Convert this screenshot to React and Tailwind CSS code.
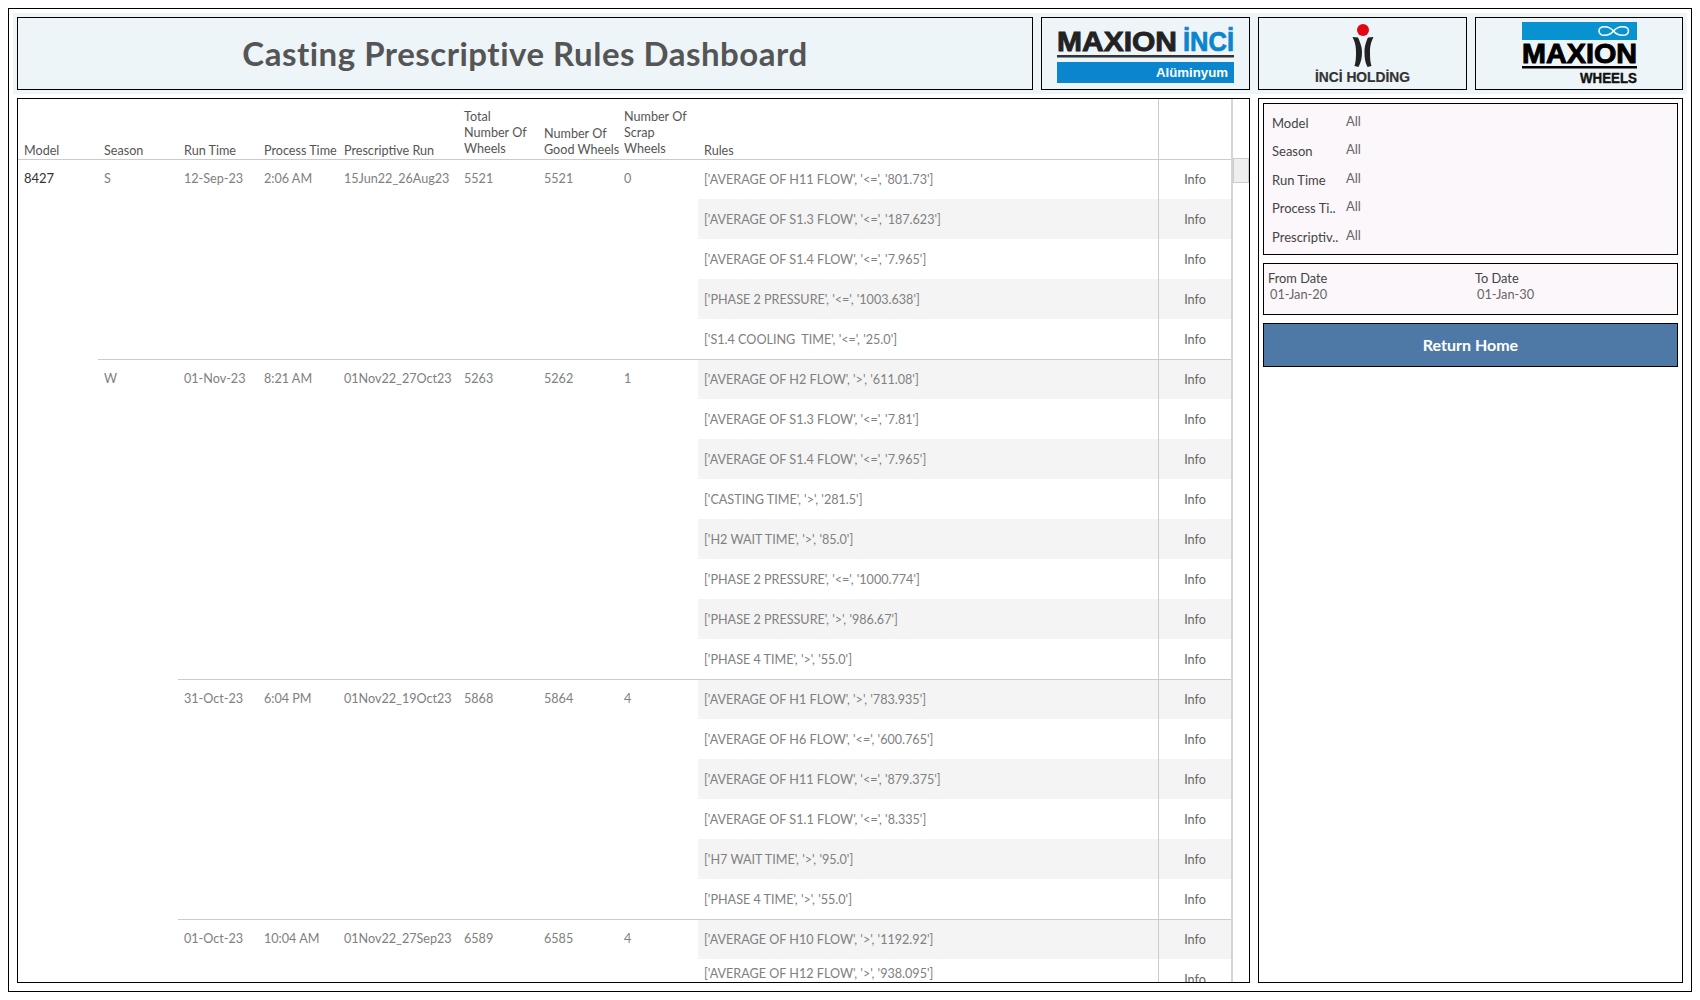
import React from 'react';

const seasons = [
  {
    season: 'S',
    runs: [
      {
        runTime: '12-Sep-23', process: '2:06 AM', run: '15Jun22_26Aug23', total: '5521', good: '5521', scrap: '0', startGrey: false,
        rules: [
          "['AVERAGE OF H11 FLOW', '<=', '801.73']",
          "['AVERAGE OF S1.3 FLOW', '<=', '187.623']",
          "['AVERAGE OF S1.4 FLOW', '<=', '7.965']",
          "['PHASE 2 PRESSURE', '<=', '1003.638']",
          "['S1.4 COOLING  TIME', '<=', '25.0']",
        ],
      },
    ],
  },
  {
    season: 'W',
    runs: [
      {
        runTime: '01-Nov-23', process: '8:21 AM', run: '01Nov22_27Oct23', total: '5263', good: '5262', scrap: '1', startGrey: true,
        rules: [
          "['AVERAGE OF H2 FLOW', '>', '611.08']",
          "['AVERAGE OF S1.3 FLOW', '<=', '7.81']",
          "['AVERAGE OF S1.4 FLOW', '<=', '7.965']",
          "['CASTING TIME', '>', '281.5']",
          "['H2 WAIT TIME', '>', '85.0']",
          "['PHASE 2 PRESSURE', '<=', '1000.774']",
          "['PHASE 2 PRESSURE', '>', '986.67']",
          "['PHASE 4 TIME', '>', '55.0']",
        ],
      },
      {
        runTime: '31-Oct-23', process: '6:04 PM', run: '01Nov22_19Oct23', total: '5868', good: '5864', scrap: '4', startGrey: true,
        rules: [
          "['AVERAGE OF H1 FLOW', '>', '783.935']",
          "['AVERAGE OF H6 FLOW', '<=', '600.765']",
          "['AVERAGE OF H11 FLOW', '<=', '879.375']",
          "['AVERAGE OF S1.1 FLOW', '<=', '8.335']",
          "['H7 WAIT TIME', '>', '95.0']",
          "['PHASE 4 TIME', '>', '55.0']",
        ],
      },
      {
        runTime: '01-Oct-23', process: '10:04 AM', run: '01Nov22_27Sep23', total: '6589', good: '6585', scrap: '4', startGrey: true,
        rules: [
          "['AVERAGE OF H10 FLOW', '>', '1192.92']",
          "['AVERAGE OF H12 FLOW', '>', '938.095']",
        ],
      },
    ],
  },
];

const filters = [
  ['Model', 'All'],
  ['Season', 'All'],
  ['Run Time', 'All'],
  ['Process Ti..', 'All'],
  ['Prescriptiv..', 'All'],
];

const logoText = { fontFamily: '"Liberation Sans", Arial, sans-serif', fontWeight: 700 };

const LogoBox = ({ width, children }) => (
  <div className={`h-[73px] border border-black ${width}`}>{children}</div>
);

const MaxionInciLogo = () => (
  <svg className="block w-full h-full" viewBox="1042 18 207 71">
    <text x="1057" y="50.5" fontSize="27.5" fill="#222" stroke="#222" strokeWidth="0.9" textLength="120" lengthAdjust="spacingAndGlyphs" style={logoText}>MAXION</text>
    <text x="1183" y="50.5" fontSize="27.5" fill="#0a85ce" stroke="#0a85ce" strokeWidth="0.7" textLength="51" lengthAdjust="spacingAndGlyphs" style={logoText}>İNCİ</text>
    <rect x="1057" y="55" width="177" height="2.5" fill="#333" />
    <rect x="1057" y="62" width="177" height="21" fill="#0a85ce" />
    <text x="1156" y="77" fontSize="13" fill="#fff" textLength="72" lengthAdjust="spacingAndGlyphs" style={logoText}>Alüminyum</text>
  </svg>
);

const InciHoldingLogo = () => (
  <svg className="block w-full h-full" viewBox="1259 18 207 71">
    <circle cx="1363" cy="30" r="6" fill="#e30613" />
    <path d="M1352.5 37 L1358 37.5 C1361 44 1362 48 1362 52 C1362 58 1361 62 1358.5 67 L1354.5 66 C1356 61 1356 57 1356 52 C1356 47 1355.5 43 1352.5 37Z" fill="#222" />
    <path d="M1373.5 37 L1368 37.5 C1365 44 1364.5 48 1364.5 52 C1364.5 58 1365 62 1367.5 67 L1371.5 66 C1370 61 1370 57 1370 52 C1370 47 1370.5 43 1373.5 37Z" fill="#222" />
    <text x="1315" y="82" fontSize="14" fill="#333" stroke="#333" strokeWidth="0.2" textLength="95" lengthAdjust="spacingAndGlyphs" style={logoText}>İNCİ HOLDİNG</text>
  </svg>
);

const MaxionWheelsLogo = () => (
  <svg className="block w-full h-full" viewBox="1476 18 206 71">
    <rect x="1522" y="22" width="115" height="18" fill="#0893d0" />
    <path d="M1613.5 31 C1609 25.5 1599 25 1599 31 C1599 37 1609 36.5 1613.5 31 C1618 25.5 1628.5 25 1628.5 31 C1628.5 37 1618 36.5 1613.5 31Z" fill="none" stroke="#fff" strokeWidth="1.6" />
    <text x="1522" y="63" fontSize="28.5" fill="#000" stroke="#000" strokeWidth="1" textLength="115" lengthAdjust="spacingAndGlyphs" style={logoText}>MAXION</text>
    <rect x="1522" y="66" width="115" height="2.5" fill="#000" />
    <text x="1580" y="83" fontSize="14" fill="#111" stroke="#111" strokeWidth="0.4" textLength="57" lengthAdjust="spacingAndGlyphs" style={logoText}>WHEELS</text>
  </svg>
);

const Cell = ({ width, rule, children }) => (
  <div className={`${width} h-10 pl-[6px] pb-[1px] flex items-center text-[12.6px] text-[#808080] whitespace-nowrap overflow-hidden ${rule ? 'border-t border-[#ccc]' : ''}`}>
    {children}
  </div>
);

const RuleRow = ({ rule, grey, topRule, last }) => (
  <div className={`flex h-10 ${grey ? 'bg-[#f4f4f4]' : ''} ${topRule ? 'border-t border-[#ccc]' : ''}`}>
    <div className="w-[460px] pl-[6px] pt-[2px] flex items-center text-[12.6px] text-[#808080] whitespace-pre">
      <span className={last ? 'mb-3' : ''}>{rule}</span>
    </div>
    <div className="w-[73px] pt-[2px] flex items-center justify-center text-[12.6px] text-[#666] border-l border-[#ccc]">Info</div>
  </div>
);

const HeaderCell = ({ width, pad = 'pb-0', children }) => (
  <div className={`${width} ${pad} pl-[6px] text-[12.6px] leading-[16px] text-[#555] whitespace-nowrap`}>{children}</div>
);

const App = () => {
  return (
    <div className="w-[1700px] h-[1000px] bg-white p-2 font-['Lato',sans-serif]">
      <div className="h-[984px] border border-black px-1 pt-1">
        {/* Header */}
        <div className="h-[81px] bg-[#eef5f9] p-1 flex gap-2">
          <div className="flex-1 h-[73px] border border-black flex items-center justify-center">
            <h1 className="text-[33px] tracking-[0.5px] font-bold text-[#555]">Casting Prescriptive Rules Dashboard</h1>
          </div>
          <LogoBox width="w-[209px]"><MaxionInciLogo /></LogoBox>
          <LogoBox width="w-[209px]"><InciHoldingLogo /></LogoBox>
          <LogoBox width="w-[208px]"><MaxionWheelsLogo /></LogoBox>
        </div>

        <div className="mt-1 px-1 flex gap-2">
          {/* Table */}
          <div className="w-[1233px] h-[885px] border border-black flex overflow-hidden">
            <div className="w-[1213px]">
              <div className="h-[60px] flex items-end">
                <HeaderCell width="w-[80px]">Model</HeaderCell>
                <HeaderCell width="w-[80px]">Season</HeaderCell>
                <HeaderCell width="w-[80px]">Run Time</HeaderCell>
                <HeaderCell width="w-[80px]">Process Time</HeaderCell>
                <HeaderCell width="w-[120px]">Prescriptive Run</HeaderCell>
                <HeaderCell width="w-[80px]" pad="pb-[2px]">Total<br />Number Of<br />Wheels</HeaderCell>
                <HeaderCell width="w-[80px]" pad="pb-[1px]">Number Of<br />Good Wheels</HeaderCell>
                <HeaderCell width="w-[80px]" pad="pb-[2px]">Number Of<br />Scrap<br />Wheels</HeaderCell>
                <HeaderCell width="w-[460px]">Rules</HeaderCell>
                <div className="w-[73px] h-[60px] border-l border-[#ccc]"></div>
              </div>
              <div className="flex">
                <div className="w-[80px] h-10 pl-[6px] pb-[1px] flex items-center text-[13px] text-[#333] border-t border-[#ccc]">8427</div>
                <div className="flex-1">
                  {seasons.map((s) => (
                    <div key={s.season} className="flex">
                      <Cell width="w-[80px]" rule>{s.season}</Cell>
                      <div className="flex-1">
                        {s.runs.map((r) => (
                          <div key={r.runTime} className="flex">
                            <Cell width="w-[80px]" rule>{r.runTime}</Cell>
                            <Cell width="w-[80px]" rule>{r.process}</Cell>
                            <Cell width="w-[120px]" rule>{r.run}</Cell>
                            <Cell width="w-[80px]" rule>{r.total}</Cell>
                            <Cell width="w-[80px]" rule>{r.good}</Cell>
                            <Cell width="w-[80px]" rule>{r.scrap}</Cell>
                            <div>
                              {r.rules.map((rule, k) => (
                                <RuleRow
                                  key={rule}
                                  rule={rule}
                                  grey={r.startGrey ? k % 2 === 0 : k % 2 === 1}
                                  topRule={k === 0}
                                  last={rule.includes('H12')}
                                />
                              ))}
                            </div>
                          </div>
                        ))}
                      </div>
                    </div>
                  ))}
                </div>
              </div>
            </div>
            {/* Scrollbar */}
            <div className="flex-1 border-l-2 border-[#d4d4d4] pt-[59px]">
              <div className="h-[25px] bg-[#efefef] border border-[#ccc]"></div>
            </div>
          </div>

          {/* Filters */}
          <div className="flex-1 h-[885px] border border-black p-1">
            <div className="h-[152px] border border-black bg-[#fbf7fb] pl-2 pt-[5px]">
              {filters.map(([label, value]) => (
                <div key={label} className="h-[28.6px] flex items-center text-[13px]">
                  <span className="w-[74px] text-[#444]">{label}</span>
                  <span className="mb-1 text-[#666]">{value}</span>
                </div>
              ))}
            </div>
            <div className="mt-2 h-[52px] border border-black bg-[#fbf7fb] grid grid-cols-[207px_1fr] pl-1 pt-[6px] text-[12.8px] leading-[16px]">
              <div>
                <div className="text-[#444]">From Date</div>
                <div className="pl-[2px] text-[#666]">01-Jan-20</div>
              </div>
              <div>
                <div className="text-[#444]">To Date</div>
                <div className="pl-[2px] text-[#666]">01-Jan-30</div>
              </div>
            </div>
            <button className="mt-2 w-full h-[44px] border border-black bg-[#4e79a7] text-white font-bold text-[16px]">Return Home</button>
          </div>
        </div>
      </div>
    </div>
  );
};

export default App;
